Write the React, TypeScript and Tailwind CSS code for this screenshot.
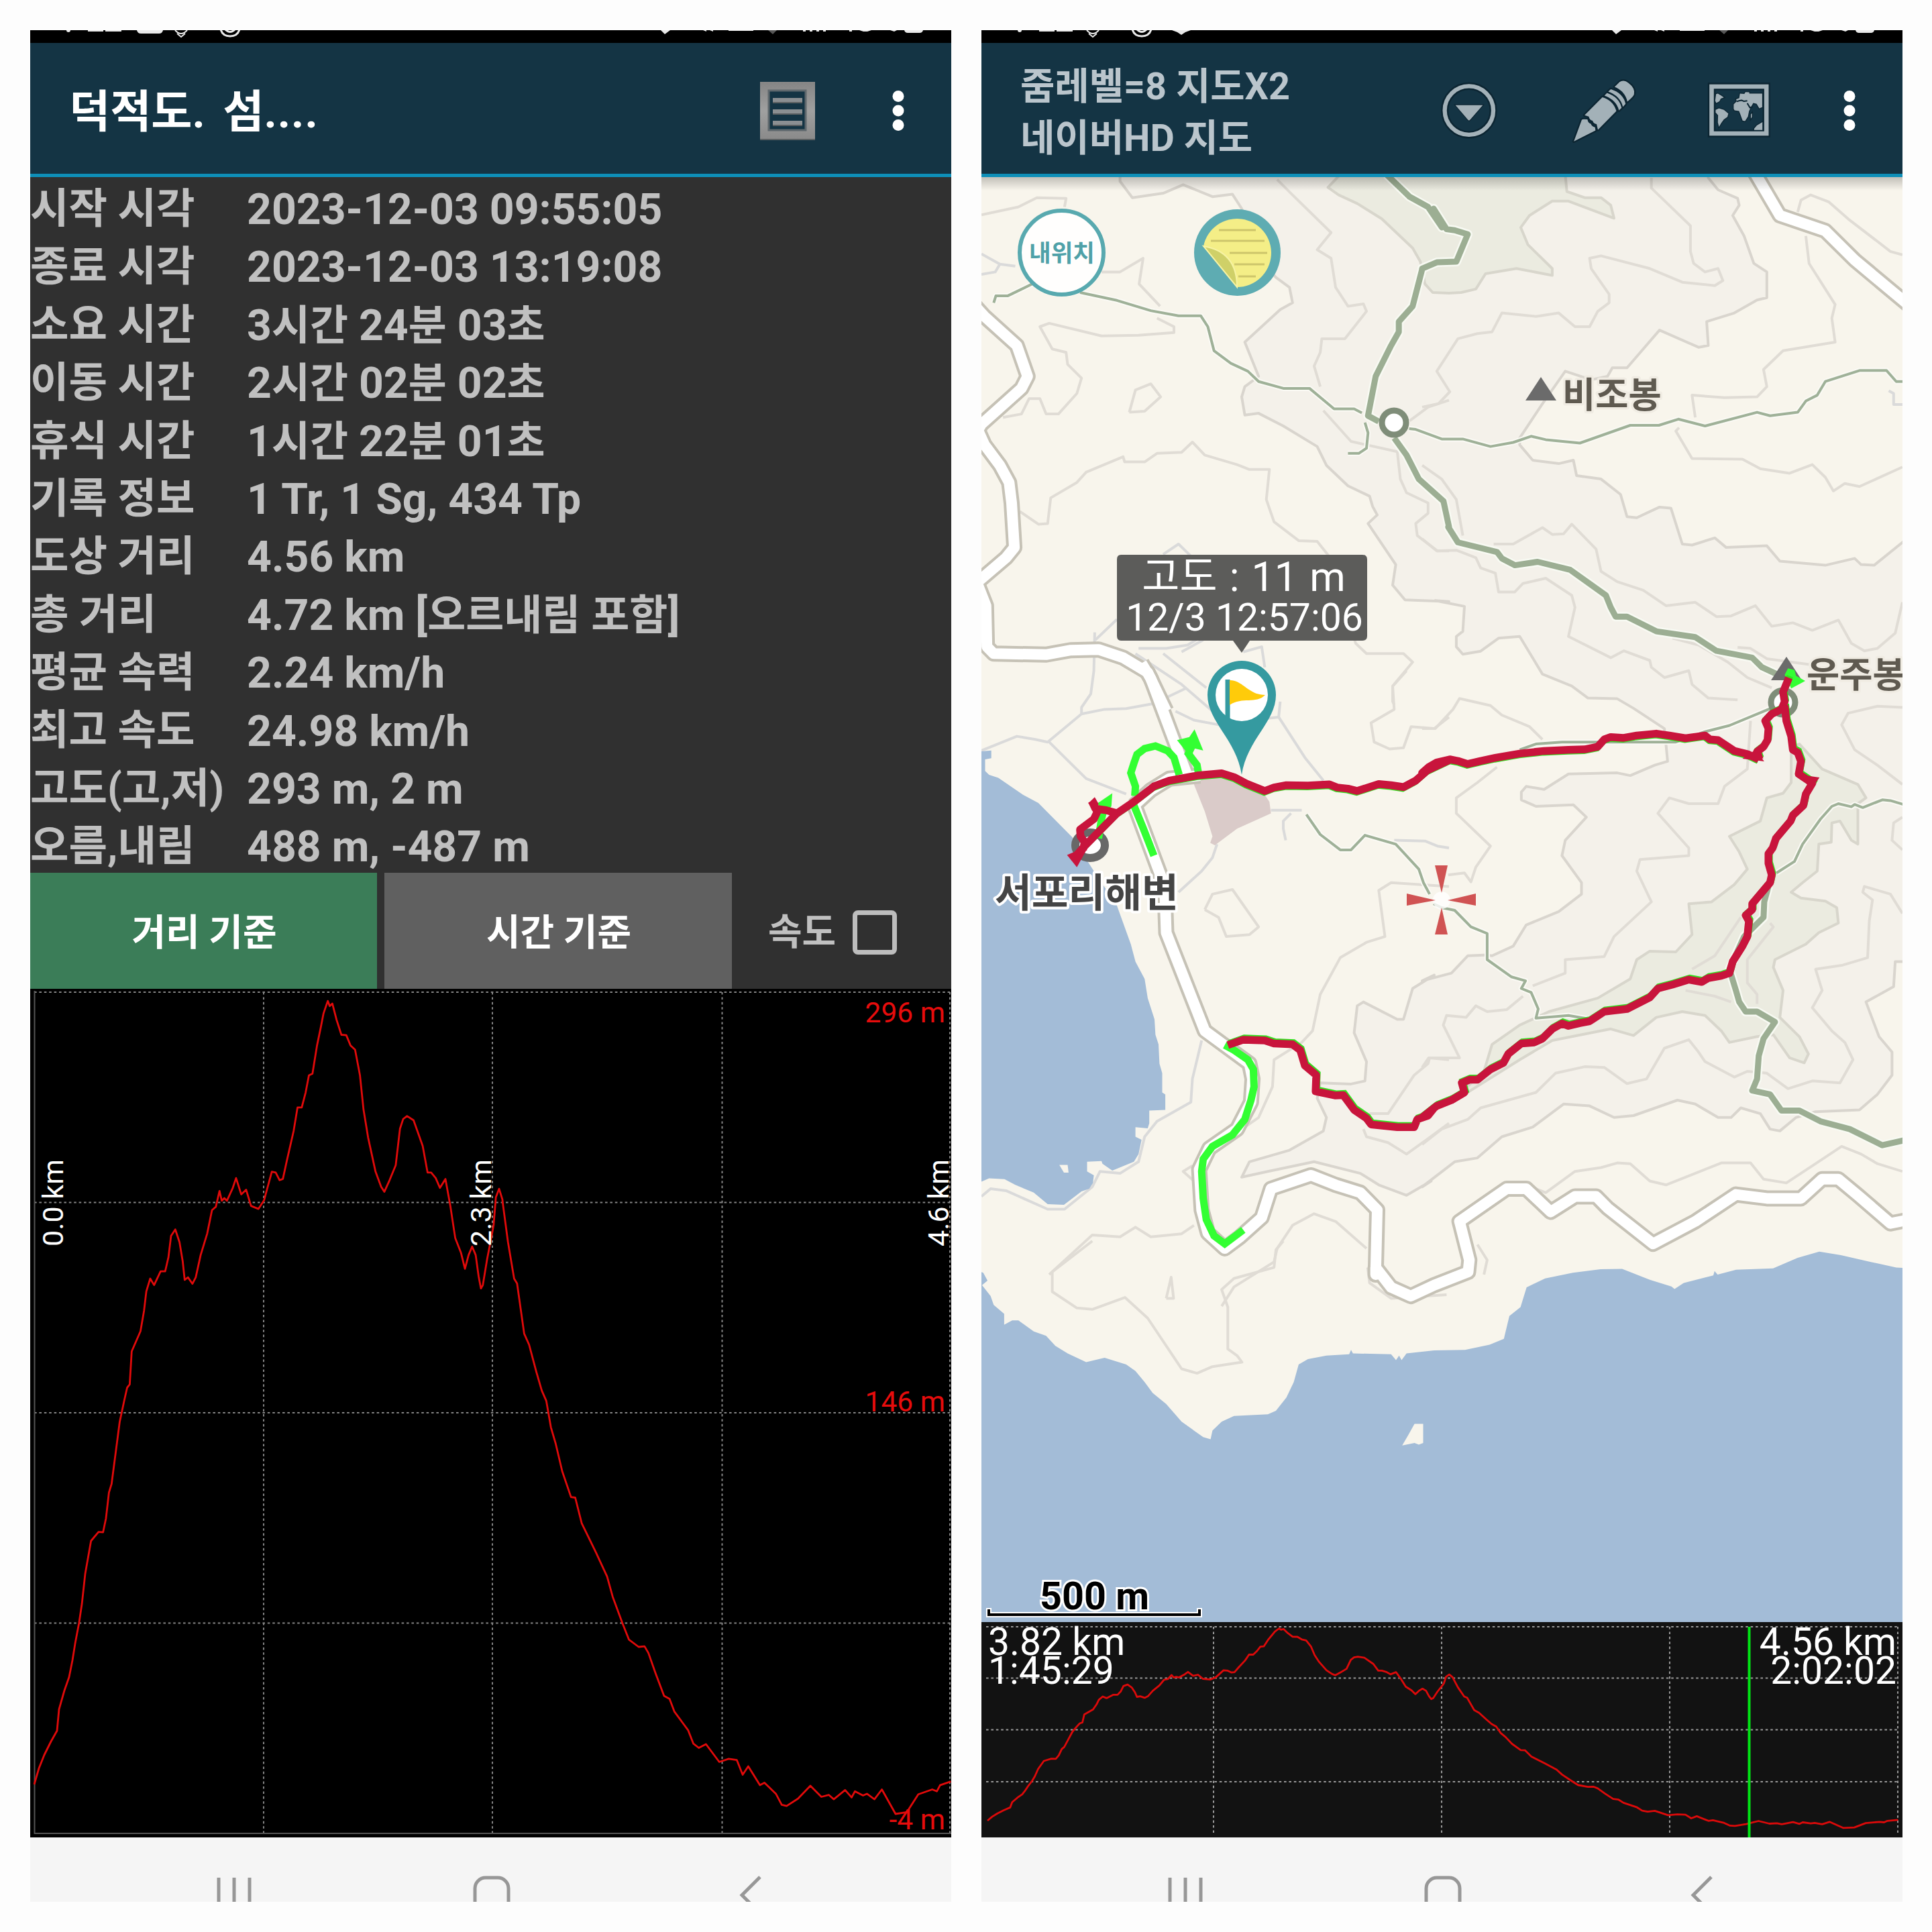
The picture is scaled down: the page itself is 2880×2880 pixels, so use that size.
import React from "react";

type Plot = (points: string) => string;

// Survey sheets: each one has its own origin and scale on the canvas
const sheet = (ox: number, oy: number, kx: number, ky: number): Plot => (points) =>
  points
    .split(" ")
    .map((p) => {
      const [x, y] = p.split(",").map(Number);
      return `${(ox + x * kx).toFixed(1)},${(oy + y * ky).toFixed(1)}`;
    })
    .join(" ");

const nw = sheet(1440, 260, 0.4592, 0.5102);
const ne = sheet(2120, 260, 0.4847, 0.5102);
const sw = sheet(1440, 1000, 0.4592, 0.574);
const se = sheet(2120, 1000, 0.4847, 0.574);
const south = sheet(1440, 1850, 0.9184, 0.6569);
const left = sheet(0, 1450, 0.4847, 0.6378);
const right = sheet(700, 1450, 0.4847, 0.912);

const stats = [
  ["시작 시각", "2023-12-03 09:55:05"],
  ["종료 시각", "2023-12-03 13:19:08"],
  ["소요 시간", "3시간 24분 03초"],
  ["이동 시간", "2시간 02분 02초"],
  ["휴식 시간", "1시간 22분 01초"],
  ["기록 정보", "1 Tr, 1 Sg, 434 Tp"],
  ["도상 거리", "4.56 km"],
  ["총 거리", "4.72 km [오르내림 포함]"],
  ["평균 속력", "2.24 km/h"],
  ["최고 속도", "24.98 km/h"],
  ["고도(고,저)", "293 m, 2 m"],
  ["오름,내림", "488 m, -487 m"],
];

const profile = [
  "51,2660 58,2636 66,2616 76,2596 85,2580 88,2548 96,2520 103,2500 108,2475",
  left(
    "231,1568 243,1520 252,1475 262,1405 280,1328 303,1307 317,1308 326,1275 335,1215 343,1195 357,1115 368,1050 382,1000 391,970 399,962 405,885 432,838 443,790 450,745 462,715 474,730 494,698 508,698 518,665 526,615 539,600 552,630 562,675 568,718 578,712 592,727 602,712 617,660 637,610 652,555 664,547 675,510 682,533 690,527 698,533 716,503 726,480 742,518 757,507 772,545 795,552 812,532 836,465 848,467 860,485 870,482 882,440 903,370 915,315 928,315 940,280 950,240 961,236 975,170 986,130 995,95 1008,66 1014,78 1022,72 1035,110 1050,145 1065,146 1078,170 1092,180 1107,240 1118,320 1132,385 1155,465 1172,500 1182,512 1198,485 1217,450 1230,365 1240,342 1252,335 1272,345 1300,405 1315,467 1326,467 1340,480 1353,503 1370,482 1385,545 1400,620 1418,655 1430,692 1441,660 1452,640 1463,660 1472,710 1479,738 1485,730 1498,670 1512,615 1518,590 1525,525 1535,505 1545,530"
  ),
  right(
    "103,380 118,440 137,500 146,508 168,590 183,608 205,652 222,683 236,700 250,743 265,770 285,815 312,857 325,858 345,900 388,947 423,987 440,1020 470,1063 490,1090 520,1102 538,1101 550,1112 572,1145 598,1182 615,1187 630,1208 672,1238 688,1260 705,1267 727,1261 768,1290 797,1285 822,1287 840,1311 857,1297 893,1328 907,1324 942,1342 960,1360 975,1362 1010,1350 1048,1329 1082,1347 1105,1344 1120,1351 1155,1336 1175,1348 1185,1338 1210,1345 1222,1342 1245,1351 1268,1335 1310,1375 1345,1372 1380,1343 1423,1335 1437,1338 1447,1328 1480,1322"
  ),
].join(" ");

// Same profile squeezed into the strip under the map
const miniProfile = sheet(1472 - 51 * 0.9934, 2427 - 1490 * 0.2453, 0.9934, 0.2453)(profile);

const upland = [
  nw("500,0 500,20 540,68 640,55 705,30 800,65 865,58 895,100 960,250 1005,300 1050,330 1060,375 1020,395 905,490 950,590 905,620 895,650 905,703 950,698 1030,735 1140,795 1170,850 1240,910 1310,940 1320,970 1335,995 1305,1020 1395,1140 1385,1200 1425,1243 1568,1248"),
  ne("40,1245 130,1262 125,1335 105,1350 105,1380 125,1402 180,1393 235,1355 300,1350 370,1460 460,1495 510,1530 600,1532 650,1560"),
  se("745,150 755,235 715,245 640,272 600,265 450,268 375,308 320,300 305,315 305,335 350,352 465,348 505,380 440,440 430,480 490,550 490,580 420,625 320,660 280,715 215,740 200,738 140,740 90,785 0,805"),
  sw("1520,790 1450,825 1420,905 1400,905 1290,860 1270,870 1260,940 1300,1015 1295,1065 1250,1073 1150,1070 1140,1110 1170,1160 1160,1195 1050,1245 920,1275 895,1315 980,1300 1130,1275 1280,1305 1340,1335 1430,1362 1510,1325"),
  se("0,1340 100,1275 170,1265 245,1210 340,1185 435,1125 515,1130 590,1160 650,1155 785,1115 840,1125 910,1160 950,1160 980,1135 1040,1150 1070,1190 1100,1195 1150,1160 1210,1145 1345,1140 1400,1100 1445,1050 1445,990 1405,950 1365,860 1450,820 1455,755 1520,755"),
  ne("1520,1040 1477,1075 1390,1142 1350,1140 1330,1122 1240,1142 1100,1130 1060,1085 935,1090 900,1062 830,1083 800,1080 765,975 730,972 660,1003 630,1000 610,935 550,890 475,880 465,835 420,845 340,835 300,790 300,770 370,670 440,575 520,600 570,590 585,565 630,565 730,455 850,505 880,500 875,430 960,405 1030,367 1060,360 1060,285 1020,260 990,180 955,120 975,90 970,70 910,45 880,10 880,-10"),
].join(" ");

const valleyNorth = [
  nw("1215,0 1175,38 1210,60 1270,85 1350,130 1450,215 1475,255 1490,320 1515,345 1568,347"),
  ne("120,345 165,335 195,290 290,275 400,295 400,275 325,205 303,155 330,120 400,78 450,78 590,128 580,90 550,68 500,68 445,50 440,0"),
].join(" ");

const valleySouth = se(
  "1135,200 1135,290 1110,318 1060,330 1040,390 945,430 975,470 1000,515 960,555 890,600 820,605 830,685 780,730 700,728 660,750 640,800 540,850 390,885 300,920 215,970 190,1040 100,1110 130,1100 300,1010 400,960 580,930 650,947 720,900 800,885 870,895 920,935 945,965 1030,950 1080,945 1130,1005 1175,1018 1188,995 1160,950 1100,900 1110,830 1080,770 1085,750 1180,710 1220,680 1280,655 1275,615 1240,598 1165,590 1135,575 1170,550 1215,520 1220,450 1258,445 1260,395 1285,390 1320,440 1340,450 1340,345 1365,330 1340,295 1230,255 1160,190"
);

const contours = [
  nw("50,118 170,95 230,68 325,70 320,95"),
  nw("440,285 500,285 575,245 562,320 630,385"),
  nw("620,420 675,445 675,462 560,470 440,472 270,435 240,445 280,510 325,520 330,555 375,595 360,640 300,700 260,700 240,655 205,655 180,700 120,710"),
  nw("530,695 550,630 600,612 632,650 580,692 530,695"),
  nw("175,985 235,1022 265,1020 275,945 360,900 390,870 510,825 515,840 580,840 620,815 700,812 735,782 775,820 880,848 920,862 985,862 975,950 1000,1015 1080,1070 1140,1072 1200,1140"),
  nw("1010,15 1060,60 1185,170 1140,220 1185,245 1200,330 1240,385 1290,378 1300,400 1230,480 1155,480 1150,520 1130,560 1150,620"),
  nw("1160,690 1250,780 1400,810 1410,890 1430,930 1500,960 1500,990 1460,1020 1465,1055 1530,1100 1568,1100"),
  nw("1440,720 1500,680 1568,660"),
  nw("1240,1300 1265,1370 1300,1400 1420,1400 1450,1425 1385,1495 1385,1540 1390,1550"),
  ne("705,10 705,40 825,150 825,225 835,260 870,285 910,275 925,310 900,325 800,315 700,275 550,238 515,245 520,275 575,350 575,375 540,400 515,445 470,445 420,405 350,415 245,405 215,460 170,465 110,480 45,575 85,635 50,670 0,680"),
  ne("1155,110 1165,75 1195,60 1250,80 1310,130 1440,225 1477,235"),
  ne("1180,180 1190,260 1270,380 1260,420 1270,490 1110,515 1050,570 1060,620 1030,650 930,652 830,645 840,710"),
  ne("790,740 780,750 830,830 985,832 1040,860 1130,873 1200,848 1240,885 1265,925 1300,903 1345,912 1477,855"),
  ne("220,1080 280,1080 370,1032 400,1052 435,1050 460,1022 535,1095 550,1160 600,1190 680,1215 750,1260 840,1250 905,1292 950,1290 1025,1260 1075,1320 1140,1310 1200,1332 1280,1302 1320,1370 1360,1392 1400,1385 1455,1340 1477,1250"),
  ne("0,850 60,890 105,950 125,1055"),
  ne("0,1065 45,1100 105,1098 165,1120 180,1150 225,1165 235,1220 285,1220 310,1195 380,1180 460,1230 470,1265 450,1350 580,1412 620,1392 700,1420 705,1440 745,1470 820,1450 830,1490 880,1530 970,1535"),
  ne("770,1355 850,1375 940,1425 1000,1470 1075,1500"),
  ne("970,1382 1010,1385 1060,1415 1190,1432"),
  se("0,150 40,150 95,100 115,72 210,90 245,115 330,145 370,178"),
  se("1477,95 1400,92 1310,110 1290,140 1330,205 1400,245 1477,295"),
  se("230,250 170,290 105,330 105,370 210,455 165,510 150,548 130,525 80,530"),
  se("1010,130 1000,255 930,300 910,345 820,345 760,330 725,370 820,460 820,480 670,490 660,520 705,600 590,690 560,742 440,750 440,785 340,818"),
  se("0,1230 60,1190 140,1165 180,1135 350,1095 410,1045 500,1028 560,1030 630,1072 690,1060 745,980 820,958 850,990 870,1015 960,1055 1000,1040 1060,1045 1125,1085 1200,1065 1285,1070 1325,1010 1300,965 1260,935 1200,875 1230,830 1210,775 1290,765 1370,745 1375,650 1385,595 1355,575 1360,560 1440,580 1477,630"),
  se("0,1030 20,1005 115,1005 65,920 75,895 135,900 165,870 200,885 260,880 310,845"),
  se("320,1335 380,1355 470,1300 550,1290 600,1278 640,1280 700,1325 750,1335 920,1278 1010,1278 1050,1320 1120,1330 1210,1280 1290,1235 1350,1255 1400,1280 1477,1300"),
  se("1477,380 1450,395 1445,440 1477,465"),
  se("810,830 900,845 950,860"),
  se("980,640 900,740 830,775"),
  se("1070,655 1080,665 1000,750 1000,810 1030,840 1030,865"),
  se("170,1490 200,1530 190,1568"),
  sw("1430,0 1385,40 1390,100 1315,135 1325,185 1375,203 1420,200 1445,145 1520,150 1568,120"),
  sw("775,620 800,580 865,568 950,665 920,685 845,690 820,640 775,620"),
  sw("1568,560 1380,550 1340,570 1360,690 1300,705 1215,745 1150,840 1125,935 1090,965 1000,1010 995,1080 950,1160 905,1185"),
  sw("1568,1010 1505,1005 1500,1020 1455,1050 1370,1150 1310,1150"),
  sw("1290,1190 1300,1210 1370,1225 1430,1255 1500,1215 1568,1175"),
  sw("735,1285 705,1300 740,1325"),
  sw("270,1568 410,1465 500,1470 550,1445 600,1470 700,1462 740,1440"),
  sw("1300,1500 1200,1430 1130,1410 1060,1440 1010,1500 1000,1535 870,1600 830,1650"),
  south("205,0 140,70 140,115 180,152 205,155 258,128 295,175 350,290 375,300 400,285 448,275 440,260 425,245 425,150 415,110 435,85 500,60 503,20 515,0"),
  south("325,130 333,82 337,130 325,130"),
  south("652,60 655,95 690,130 780,122"),
];

const lanes = [
  nw("50,232 110,262 160,268"),
  nw("50,292 95,285 110,262"),
  nw("640,1110 690,1080 730,1115"),
  nw("420,1360 490,1300"),
  nw("560,1385 650,1385 720,1375 800,1330"),
  nw("700,1395 770,1360"),
  nw("900,1395 960,1380 970,1440"),
  nw("550,1400 700,1490 800,1568"),
  nw("640,1400 780,1500"),
  sw("50,207 165,170 225,178 265,185 375,112 450,100 520,98 610,85 715,45"),
  sw("375,112 375,95 405,60 415,0 418,-100"),
  sw("270,185 390,280 520,320"),
  sw("680,105 740,128 820,140"),
  sw("1020,80 1015,120 960,125"),
  sw("1015,120 1100,225 1160,285"),
  sw("990,362 1090,362"),
  sw("1055,370 1030,390 1030,410 1038,440"),
  sw("815,450 800,485 765,520 690,575"),
  sw("1390,440 1490,442 1530,455 1568,460"),
  sw("765,960 735,1060 730,1120 620,1170 580,1210 560,1275 500,1305 435,1300 410,1340 320,1398 265,1398 130,1350 80,1345 50,1365"),
  ne("1435,632 1450,640 1450,672 1477,672"),
];

const roads = [
  nw("30,385 60,415 165,500 200,590 180,625 50,730 40,745"),
  nw("40,750 60,790 110,850 140,900 148,960 157,1090 130,1120 45,1185"),
  nw("30,1180 65,1260 68,1380 90,1400 260,1403 340,1390 430,1388 510,1412 590,1455 650,1568"),
  sw("570,-20 600,20 715,265"),
  sw("545,345 645,560 650,680 775,935 860,985 920,1020 930,1060 925,1120 880,1190 790,1240 757,1295 765,1400 785,1460 840,1500 890,1470 960,1420 990,1345 1120,1310 1200,1335 1280,1355 1335,1400 1330,1568") +
    " " +
    south("665,60 690,105 722,125 760,100 815,70") +
    " " +
    se("145,1530 115,1430 260,1345 320,1345 395,1405 470,1365 535,1365 570,1395 710,1488 840,1430 965,1360 1060,1370 1165,1370 1230,1320 1280,1320 1340,1362 1440,1435 1500,1425"),
  sw("545,350 600,310 660,280 760,272"),
  ne("1020,-10 1100,120 1240,165 1330,250 1500,385"),
];

const ridges = [
  nw("1365,0 1440,65 1500,95 1545,155") + " " + ne("35,100 75,160 100,163 140,175 105,255 45,257 0,275") + " " + nw("1480,280 1450,385 1405,430 1405,460 1380,500 1330,590 1305,705 1340,722"),
  nw("1390,770 1430,820 1470,890 1550,955 1568,1030") + " " + ne("80,1030 110,1075 230,1103 245,1122 285,1142 355,1132 455,1155 565,1230 580,1265 595,1292 630,1292 720,1335 840,1352 905,1392 1015,1412 1045,1440 1095,1462"),
  se("1065,560 1052,600 1050,640 990,690 945,775 965,830 975,860 995,885 1030,885 1085,912 1050,955 1035,1000 1030,1060 1015,1090 1070,1100 1105,1142 1160,1142 1225,1170 1315,1190 1415,1232 1477,1220 1500,1218"),
];

const paths = [
  nw("90,375 97,355 135,355 215,320"),
  nw("370,345 490,368 600,398 690,413 762,413 785,445 805,515 860,552 915,575 950,605 1030,625 1115,625 1195,685 1260,685 1285,697"),
  nw("1240,815 1275,815 1300,800 1305,755 1295,725"),
  ne("-40,743 -20,745 60,773 125,773 210,795 280,783 335,765 380,775 485,785 640,733 728,733 788,715 870,735 1030,695 1070,705 1155,695 1180,662 1215,645 1240,605 1345,573 1428,573 1458,605 1480,605"),
  se("300,205 350,190 430,185 780,185 870,158 945,142 1070,98"),
  se("1090,525 1145,495 1170,450 1225,385 1260,352 1280,345 1320,353 1330,347 1355,355 1415,335 1440,337 1480,347"),
  sw("1105,373 1150,425 1215,465 1250,465 1295,427 1395,450 1470,515 1485,550 1505,580"),
  se("35,605 60,615 100,622 150,665 200,682 200,750 275,795 318,805 305,825 335,835 357,878 350,902 450,895 520,905"),
];

const track = [
  sw("350,487 385,455 490,370 545,340 610,300 660,285 750,272 830,266 870,276 910,293 970,312 1000,303 1040,297 1110,298 1180,295 1205,303 1240,306 1270,312 1340,294 1380,297 1420,302 1460,285 1510,250 1540,237 1568,232") +
    " " +
    se("0,265 20,250 45,238 85,230 110,234 140,242 180,234 225,226 300,215 375,208 450,205 500,204 540,197 560,178 580,172 620,174 660,168 720,163 760,168 810,175 870,168 885,178 910,180 960,208 1000,216 1035,230"),
  se("1038,230 1030,210 1050,197 1062,180 1065,150 1055,130 1075,112 1105,100 1115,80 1110,55 1128,18"),
  se("1115,90 1120,130 1135,170 1140,205 1155,212 1165,235 1158,268 1200,292 1180,320 1172,350 1140,375 1133,390 1088,435 1078,460 1065,475 1065,500 1075,530 1070,550 1030,590 1015,605 1015,620 995,635 1005,650 1000,690 985,715 955,755 945,785 920,792 880,798 860,808 820,802 770,815 725,825 700,848 630,878 560,885 515,910 485,915 450,922 430,916 400,930 370,955 345,965 305,968 265,995 250,1018 210,1035 170,1062 145,1062 122,1070 130,1095 90,1115 45,1130 0,1160") +
    " " +
    sw("1520,1135 1500,1155 1465,1165 1455,1185 1400,1185 1315,1178 1300,1162 1260,1140 1225,1102 1200,1103 1135,1092 1137,1050 1100,1025 1085,985 1060,970 1000,968 970,960 900,958 850,972"),
  sw("490,370 455,362 420,358 408,338"),
  sw("430,360 415,385 370,412 372,430 385,445 380,465"),
];

const detours = [
  sw("540,340 575,408 610,480"),
  sw("548,325 550,300 535,265 545,240 555,217 580,202 615,195 655,208 675,225 692,270"),
  sw("755,268 750,245 722,215 740,185"),
  sw("430,435 440,385 450,350"),
  sw("840,972 870,985 915,1010 933,1035 935,1080 925,1115 905,1165 865,1205 800,1235 770,1268 765,1300 770,1370 780,1425 805,1467 840,1488 900,1452"),
];

function Lines({ items, className }: { items: string[]; className: string }) {
  return (
    <g className={className}>
      {items.map((points) => (
        <polyline key={points} points={points} />
      ))}
    </g>
  );
}

function StatusBar({ variant }: { variant: "stats" | "map" }) {
  return (
    <svg viewBox="0 0 1373 19" className="block h-[19px] w-full shrink-0 bg-black">
      <g fill="#e8e8e8">
        <circle cx="57" cy="0" r="3" />
        <rect x="86" y="0" width="23" height="2" />
        <rect x="112" y="0" width="24" height="2" />
        {variant === "stats" && <path d="M159 0h39q-1 5-6 5h-27q-5 0-6-5z" />}
        {variant === "map" && <path d="M284 0h28l-8 3-6 4-6-4z" />}
        <path d="M940 0h14l-8 6z" />
        <path d="M1003 0l5 2v-2zM1013 0l5 2v-2zM1041 0h37v1h-37z" />
        <path d="M1152 0h4v2h-4zM1162 0h4v2h-4zM1172 0h4v2h-4zM1182 0h4v2h-4zM1221 0h4v2h-4zM1236 0h18l-6 2h-6zM1282 0h10l-4 2zM1303 0h28q-1 4-5 4h-18q-4 0-5-4z" />
        <path d="M1100 0h13l-6 6z" fill="#555" />
      </g>
      <g fill="none" stroke="#e8e8e8" strokeWidth="3" transform={variant === "map" ? "translate(-59 0)" : undefined}>
        <path d="M216 0q9 10 18 0M219 5l6 5 6-5" strokeWidth="2" />
        <path d="M284-1q3 10 14 10t14-10M290-2q8 9 16 0" />
      </g>
    </svg>
  );
}

function MoreIcon() {
  return (
    <svg viewBox="0 0 20 66" className="h-[66px] w-5">
      <g fill="#fff">
        <circle cx="10" cy="11.5" r="8.5" />
        <circle cx="10" cy="33" r="8.5" />
        <circle cx="10" cy="54.5" r="8.5" />
      </g>
    </svg>
  );
}

function ListIcon() {
  return (
    <svg viewBox="0 0 84 90" className="h-[90px] w-[84px]">
      <defs>
        <linearGradient id="frame" x1="0" y1="0" x2="0" y2="1">
          <stop offset="0" stopColor="#858585" />
          <stop offset="0.5" stopColor="#a0a0a0" />
          <stop offset="1" stopColor="#8a8a8a" />
        </linearGradient>
      </defs>
      <path fillRule="evenodd" d="M1 2h82v86H1zM15 16v57h53V16z" fill="url(#frame)" />
      <path d="M14 15h55v59H14z" fill="none" stroke="#5f686d" strokeWidth="3" />
      <path d="M20 29h44M20 46h44M20 63h44" stroke="#8b8f92" strokeWidth="6" />
      <path d="M20 33h44M20 50h44M20 67h44M1 88h82" stroke="#5b6062" strokeWidth="2" />
    </svg>
  );
}

function DropIcon() {
  return (
    <svg viewBox="40 40 280 300" className="h-[100px] w-[93px]">
      <circle cx="181" cy="189" r="109" fill="none" stroke="#0c2532" strokeWidth="34" />
      <circle cx="181" cy="189" r="109" fill="none" stroke="#a3b1b8" strokeWidth="19" />
      <path d="M120 165h123l-57 66q-5 6-10 0z" fill="#a3b1b8" stroke="#0c2532" strokeWidth="7" className="[paint-order:stroke]" />
    </svg>
  );
}

function PencilIcon() {
  return (
    <svg viewBox="630 30 300 310" className="h-[103px] w-[100px]">
      <g fill="#a3b1b8" stroke="#0c2532" strokeWidth="14" strokeLinejoin="round" className="[paint-order:stroke]">
        <path d="M648 324l34-92q1-8 12-7l15 1q3 17 15 19 5 13 19 16l2 14z" />
        <path d="M696 207l80-81q48 14 62 60v3l-82 83q-3-12-6-25-14-2-18-15-14-3-17-19z" />
        <path d="M797 107q56 18 66 66l-13 12q-11-46-65-66z" />
        <path d="M814 90q56 18 66 66l-12 13q-12-48-66-68z" />
        <path d="M831 80l22-22q18-13 41 5 30 23 24 50-2 10-30 33-10-46-57-66z" />
      </g>
    </svg>
  );
}

function WorldIcon() {
  return (
    <svg viewBox="1240 50 300 280" className="h-[93px] w-[100px]">
      <path d="M1265 83h246v211h-246z" fill="none" stroke="#0c2532" strokeWidth="34" />
      <path d="M1265 83h246v211h-246z" fill="none" stroke="#a3b1b8" strokeWidth="20" />
      <g fill="#a3b1b8" stroke="#0c2532" strokeWidth="8" className="[paint-order:stroke]">
        <path d="M1285 117l8-2 14 8 13 9-14 5-6 12-14 8-5-10z" />
        <path d="M1283 188l15-7 22 7 20 16-4 15-16 12-11 15-11 18-5-20 1-32-11-12z" />
        <path d="M1364 183v-20l14-14-3-9 14-5 3-20 20 1 5-8 17 1v6h58v61l-13 5-12-20-15-4-10 17-9 19-5 25-13 20-11-2-10-28-6-15-20-3z" />
        <path d="M1441 208l5-5v17l-5 7zM1456 272l12-14 25-15v35h-37z" />
      </g>
      <path d="M1378 150q14-4 22-5l10 4 15-2M1425 158l12 20 12-4" fill="none" stroke="#0c2532" strokeWidth="6" />
    </svg>
  );
}

function NavBar() {
  return (
    <svg viewBox="0 0 1373 96" className="block h-24 w-full shrink-0 bg-[#f5f5f5]">
      <g fill="none" stroke="#979797" strokeWidth="5">
        <path d="M281 60v50M304 60v50M327 60v50" />
        <rect x="663" y="60" width="50" height="52" rx="16" />
        <path d="M1088 59l-27 27 27 27" />
      </g>
    </svg>
  );
}

// Hangul runs are set a little smaller than the digits beside them
function Value({ text }: { text: string }) {
  return (
    <dd>
      {text.split(/([가-힣]+)/).map((part, i) =>
        i % 2 ? (
          <span key={i} className="text-[62px]">
            {part}
          </span>
        ) : (
          part
        )
      )}
    </dd>
  );
}

function AltitudeChart() {
  return (
    <svg viewBox="45 1474 1373 1265" className="block h-[1265px] w-full shrink-0 bg-black font-[Roboto]">
      <g stroke="#858585" strokeWidth="2" strokeDasharray="3.6 3.8">
        {[1479, 1792.5, 2106, 2419.5].map((y) => (
          <path key={y} d={`M51 ${y}H1418`} />
        ))}
        {[393, 734, 1076.5, 1416].map((x) => (
          <path key={x} d={`M${x} 1479V2732`} />
        ))}
      </g>
      <path d="M51.5 1477V2733H1418" fill="none" stroke="#555" strokeWidth="2" />
      <polyline points={profile} fill="none" stroke="#e00a0a" strokeWidth="2.8" strokeLinejoin="round" />
      <g fill="#e60c0c" fontSize="42.5" textAnchor="end">
        <text x="1409" y="1524">296 m</text>
        <text x="1409" y="2104">146 m</text>
        <text x="1409" y="2727">-4 m</text>
      </g>
      <g fill="#fff" fontSize="43">
        <text transform="translate(94 1858) rotate(-90)">0.0 km</text>
        <text transform="translate(732 1858) rotate(-90)">2.3 km</text>
        <text transform="translate(1414 1858) rotate(-90)">4.6 km</text>
      </g>
    </svg>
  );
}

function MiniChart() {
  return (
    <svg viewBox="1463 2418 1373 321" className="block h-[321px] w-full shrink-0 bg-[#121212] font-[Roboto]">
      <g stroke="#9a9a9a" strokeWidth="2" strokeDasharray="3.6 3.8">
        {[2425, 2501.5, 2578.5, 2656].map((y) => (
          <path key={y} d={`M1470 ${y}H2830`} />
        ))}
        {[1809, 2149, 2489, 2829].map((x) => (
          <path key={x} d={`M${x} 2425V2733`} />
        ))}
      </g>
      <polyline points={miniProfile} fill="none" stroke="#dc0a0a" strokeWidth="2.8" strokeLinejoin="round" />
      <path d="M2607.5 2425V2739" stroke="#00e414" strokeWidth="4" />
      <g fill="#fff" fontSize="57">
        <text x="1473" y="2467">3.82 km</text>
        <text x="1473" y="2510">1:45:29</text>
        <text x="2827" y="2467" textAnchor="end">4.56 km</text>
        <text x="2827" y="2510" textAnchor="end">2:02:02</text>
      </g>
    </svg>
  );
}

function TrailMap() {
  return (
    <svg viewBox="1463 264 1373 2154" className="block h-[2154px] w-full shrink-0 bg-[#f8f5ec] font-[Roboto,'Noto_Sans_CJK_KR',sans-serif]">
      <defs>
        <linearGradient id="shade" x1="0" y1="0" x2="0" y2="1">
          <stop offset="0" stopColor="#000" stopOpacity="0.22" />
          <stop offset="1" stopColor="#000" stopOpacity="0" />
        </linearGradient>
      </defs>

      {/* Ground */}
      <g strokeLinejoin="round">
        <polygon points={upland} fill="#f4f1ea" stroke="#d9d5ce" strokeWidth="4" />
        <polygon points={valleyNorth} fill="#ebebe0" stroke="#d8d6cc" strokeWidth="4" />
        <polygon points={valleySouth} fill="#ebebe0" stroke="#d8d6cc" strokeWidth="4" />
        <Lines items={contours} className="fill-none stroke-[#e0dcd5] stroke-[4]" />
        <Lines items={lanes} className="fill-none stroke-[#dadada] stroke-[4]" />
      </g>
      <polygon points={sw("740,295 775,365 800,430 793,447 808,453 880,410 990,370 985,340 960,310 870,275 780,275")} fill="#dacbc9" />

      {/* Sea */}
      <g fill="#a3bcd7">
        <polygon points={sw("40,210 82,207 82,227 62,230 62,260 75,270 105,278 185,322 235,343 345,432 355,445 415,520 490,610 535,710 550,755 580,800 590,850 612,905 615,945 625,970 628,1020 637,1045 637,1095 647,1100 647,1140 595,1142 595,1175 590,1188 550,1185 550,1210 570,1218 560,1255 545,1275 475,1298 443,1280 440,1273 393,1275 393,1300 415,1310 412,1330 400,1345 375,1352 318,1387 265,1385 220,1355 160,1335 125,1320 75,1318 40,1330")} />
        <polygon points={south("15,65 28,72 35,90 26,100 40,125 45,145 62,165 62,190 75,180 85,180 110,205 130,215 145,238 165,255 195,275 225,265 260,280 275,295 290,320 303,345 325,370 350,410 385,445 397,450 400,430 415,410 435,397 490,393 503,385 520,355 532,320 540,280 555,268 585,260 622,257 625,247 628,255 690,257 698,270 703,260 707,270 715,255 760,248 810,247 850,235 873,222 882,170 900,150 910,105 940,85 985,72 1030,64 1065,63 1110,88 1145,103 1150,109 1165,95 1213,78 1215,68 1220,76 1250,65 1310,62 1350,38 1385,24 1420,32 1470,48 1510,60 1535,62 1535,880 15,880")} />
      </g>
      <g fill="#f8f5ec">
        <polygon points={sw("303,1283 330,1283 333,1303 318,1303")} />
        <polygon points={south("728,415 742,415 742,458 735,462 728,458 708,464 718,440")} />
      </g>

      {/* Roads and trails */}
      <g strokeLinejoin="round">
        <Lines items={roads} className="fill-none stroke-[#c6c2b6] stroke-[24]" />
        <Lines items={roads} className="fill-none stroke-white stroke-[16]" />
        <Lines items={paths} className="fill-none stroke-[#fbfaf5] stroke-[8]" />
        <Lines items={ridges} className="fill-none stroke-[#f8faf3] stroke-[14]" />
        <Lines items={paths} className="fill-none stroke-[#9fb198] stroke-[4]" />
        <Lines items={ridges} className="fill-none stroke-[#9cae93] stroke-[9]" />
      </g>
      <g fill="#fff" stroke="#7f8d79" strokeWidth="9">
        <circle cx="2078" cy="630" r="18" />
        <circle cx="2658" cy="1047" r="18" />
        <ellipse cx="1625" cy="1260" rx="22" ry="19" stroke="#686868" strokeWidth="12" />
      </g>
      <g fill="#6b6b6b">
        <path d="M2297 562l23 35h-46z" />
        <path d="M2663 979l23 35h-46z" />
      </g>

      {/* Place names */}
      <g strokeLinejoin="round">
        <g fill="#5f5a50" stroke="#f0ece3" strokeWidth="7" fontSize="53.5" fontWeight="700">
          <text x="2329" y="608" className="[paint-order:stroke]">비조봉</text>
          <text x="2693" y="1025" className="[paint-order:stroke]">운주봉</text>
        </g>
        <text x="1483" y="1352" fontSize="59.5" fontWeight="700" fill="#444" stroke="#fff" strokeWidth="8" className="[paint-order:stroke]">
          서포리해변
        </text>
      </g>

      {/* Recorded track over the planned one */}
      <Lines items={detours} className="fill-none stroke-[#33ff33] stroke-[11]" />
      <g fill="#33ff33">
        <polygon points={sw("742,152 770,207 735,200 720,215 685,180 725,172")} />
        <polygon points={sw("475,318 472,352 455,370 425,345")} />
        <polygon points={ne("1125,1443 1145,1448 1150,1465 1178,1480 1135,1502 1115,1462")} />
      </g>
      <g transform="translate(1.5 -2.5)">
        <Lines items={track.slice(1, 3)} className="fill-none stroke-[#33e020] stroke-[10]" />
      </g>
      <g transform="translate(-1 2.5)">
        <Lines items={track.slice(0, 1)} className="fill-none stroke-[#33e020] stroke-[9]" />
      </g>
      <g strokeLinejoin="round">
        <Lines items={track} className="fill-none stroke-[#c8143c] stroke-[11.5]" />
      </g>
      <g fill="#c8143c">
        <polygon points={sw("328,478 398,455 360,510")} />
        <polygon points={sw("418,328 430,345 425,360 397,344")} />
        <polygon points={se("1222,277 1195,310 1165,270")} />
        <polygon points={se("1052,235 985,228 1025,205")} />
      </g>

      {/* Crosshair */}
      <circle cx="2149" cy="1342" r="13" fill="#fff" fillOpacity="0.8" />
      <g fill="#d05353">
        <path d="M2139 1290h19l-9 41zM2139 1393h19l-9-40zM2097 1332v18l43-8zM2200 1332v18l-42-8z" />
      </g>

      {/* Altitude bubble and pin */}
      <path d="M1671 827h360q7 0 7 7v114q0 7-7 7h-168l-12 18-13-18h-167q-6 0-6-7v-114q0-7 6-7z" fill="#5c5c5a" />
      <g fill="#fff" textAnchor="middle">
        <text x="1854" y="881" fontSize="61" className="[word-spacing:3px]">고도 : 11 m</text>
        <text x="1855" y="940" fontSize="57">12/3 12:57:06</text>
      </g>
      <path d="M1851 1155c-8-53-51-79-51-119a51 51 0 0 1 102 0c0 40-43 66-51 119z" fill="#359aa0" />
      <circle cx="1851" cy="1036" r="39" fill="#fff" />
      <path d="M1830 1013v58" stroke="#359aa0" strokeWidth="7" />
      <path d="M1833 1014c20 0 28 22 53 22-14 14-34 2-53 15z" fill="#ffcb0a" />

      {/* Floating buttons */}
      <circle cx="1582.5" cy="376.5" r="62.5" fill="#fff" fillOpacity="0.88" stroke="#58a9af" strokeWidth="6" />
      <text x="1583" y="390" fontSize="35.5" fontWeight="700" fill="#4fa1a8" textAnchor="middle">내위치</text>
      <circle cx="1844.5" cy="376.5" r="64.5" fill="#5eacb2" />
      <path d="M1794 367a51 51 0 1 1 50 61z" fill="#f4ee87" />
      <path d="M1794 367q50 8 50 61z" fill="#cfd068" stroke="#f7f3a4" strokeWidth="2" />
      <path d="M1817 343h55M1805 359h80M1833 377h56M1840 394h45M1846 412h26" stroke="#cdc56b" strokeWidth="3" />

      {/* Scale */}
      <g strokeLinecap="square" fill="none">
        <path d="M1474 2401v6h314v-6" stroke="#fff" strokeWidth="8" />
        <path d="M1474 2401v6h314v-6" stroke="#000" strokeWidth="4" />
      </g>
      <text x="1550" y="2399" fontSize="57.5" fontWeight="700" fill="#000" stroke="#fff" strokeWidth="6" className="[paint-order:stroke]">
        500 m
      </text>
      <rect x="1463" y="264" width="1373" height="20" fill="url(#shade)" />
    </svg>
  );
}

export default function App() {
  return (
    <div className="flex h-[2880px] w-[2880px] gap-[45px] bg-[#fdfdfd] p-[45px] pr-11 font-[Roboto,'Noto_Sans_CJK_KR',sans-serif]">
      {/* Track statistics */}
      <section className="flex h-[2790px] w-[1373px] flex-col overflow-hidden bg-[#303030]">
        <StatusBar variant="stats" />
        <header className="flex h-50 shrink-0 items-center border-b-[5px] border-[#0e8fb8] bg-[#143444] pt-1.5 pr-[69px] pl-[58px]">
          <h1 className="grow pt-1.5 text-[66.5px] font-bold text-white [word-spacing:10px]">
            덕적도. 섬<span className="tracking-[1px]">....</span>
          </h1>
          <ListIcon />
          <div className="ml-[113px]">
            <MoreIcon />
          </div>
        </header>
        <dl className="flex h-[1037px] shrink-0 flex-col text-[64.3px] font-bold text-[#c0c0c0]">
          {stats.map(([label, value]) => (
            <div key={label} className="flex h-[86.4px] items-center pt-2.5 leading-none whitespace-nowrap">
              <dt className="w-[323px] text-[62.5px]">{label}</dt>
              <Value text={value} />
            </div>
          ))}
        </dl>
        <div className="flex h-[173px] shrink-0 gap-[11px] text-[55px] font-bold text-white">
          <button className="w-[517px] bg-[#3b7d58] pt-1.5 pl-0.5">거리 기준</button>
          <button className="w-[518px] bg-[#606060] pt-1.5 pl-0.5">시간 기준</button>
          <label className="flex items-center gap-[25px] pt-1 pl-[43px] text-[#c0c0c0]">
            속도
            <span className="size-[66px] rounded-lg border-[7px] border-[#bdbdbd]" />
          </label>
        </div>
        <AltitudeChart />
        <NavBar />
      </section>

      {/* Track map */}
      <section className="flex h-[2790px] w-[1373px] flex-col overflow-hidden">
        <StatusBar variant="map" />
        <header className="flex h-50 shrink-0 items-center border-b-[5px] border-[#0e8fb8] bg-[#143444] pt-1.5 pr-[69px] pl-[58px]">
          <p className="w-[622px] pt-1.5 text-[55.8px] leading-[77px] font-bold text-[#bac5cc]">
            줌레벨=8 지도X2
            <br />
            네이버HD 지도
          </p>
          <DropIcon />
          <div className="ml-[104px]">
            <PencilIcon />
          </div>
          <div className="ml-[103px]">
            <WorldIcon />
          </div>
          <div className="ml-auto">
            <MoreIcon />
          </div>
        </header>
        <TrailMap />
        <MiniChart />
        <NavBar />
      </section>
    </div>
  );
}
